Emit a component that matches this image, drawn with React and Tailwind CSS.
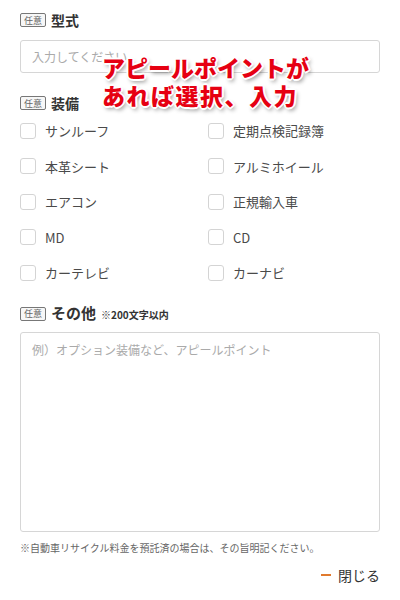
import React from "react";

const equipment = [
  ["サンルーフ", "定期点検記録簿"],
  ["本革シート", "アルミホイール"],
  ["エアコン", "正規輸入車"],
  ["MD", "CD"],
  ["カーテレビ", "カーナビ"],
];

const Badge = () => (
  <span className="inline-flex items-center justify-center h-[14px] px-[3px] border border-[#777] rounded-[2px] text-[9px] leading-none text-[#666] bg-[#f7f7f7]">
    任意
  </span>
);

const Check = ({ label }) => (
  <label className="flex items-center gap-[9px] h-[35.5px]">
    <span className="w-[16px] h-[16px] border border-[#d4d4d4] rounded-[3px] bg-white shrink-0" />
    <span className="text-[13px] text-[#4a4a4a]">{label}</span>
  </label>
);

export default function App() {
  return (
    <div
      className="relative w-[400px] h-[600px] bg-white overflow-hidden px-[20px] pt-[10px]"
      style={{ fontFamily: '"Noto Sans CJK JP", "Noto Sans", sans-serif' }}
    >
      {/* 型式 */}
      <div className="flex items-center gap-[5px] h-[20px]">
        <Badge />
        <span className="text-[14px] font-bold text-[#333]">型式</span>
      </div>
      <div className="mt-[10px] h-[33px] w-[360px] border border-[#d6d6d6] rounded-[3px] flex items-center px-[11px] text-[12px] text-[#aaa]">
        入力してください
      </div>

      {/* 装備 */}
      <div className="mt-[20px] flex items-center gap-[5px] h-[20px]">
        <Badge />
        <span className="text-[14px] font-bold text-[#333]">装備</span>
      </div>
      <div className="grid grid-cols-[188px_1fr]">
        {equipment.map(([a, b]) => (
          <React.Fragment key={a}>
            <Check label={a} />
            <Check label={b} />
          </React.Fragment>
        ))}
      </div>

      {/* その他 */}
      <div className="mt-[12px] flex items-center gap-[5px] h-[22px]">
        <Badge />
        <span className="text-[15px] font-bold text-[#333]">その他</span>
        <span className="text-[10px] font-bold text-[#333] mt-[1px]">※200文字以内</span>
      </div>
      <div className="mt-[7px] h-[200px] w-[360px] border border-[#d6d6d6] rounded-[3px] px-[11px] pt-[8px] text-[12px] text-[#aaa]">
        例）オプション装備など、アピールポイント
      </div>
      <p className="mt-[8px] text-[10px] text-[#666]">
        ※自動車リサイクル料金を預託済の場合は、その旨明記ください。
      </p>
      <div className="mt-[10px] flex justify-end items-center gap-[7px]">
        <span className="w-[10px] h-[2px] bg-[#e07a2e]" />
        <span className="text-[14px] text-[#333]">閉じる</span>
      </div>

      {/* annotation */}
      <div className="absolute left-[102px] top-[53px] text-[23px] leading-[28px] font-black text-[#e60012] [text-shadow:-1px_-1px_0_#fff,1px_-1px_0_#fff,-1px_1px_0_#fff,1px_1px_0_#fff,0_-2px_0_#fff,0_2px_0_#fff,-2px_0_0_#fff,2px_0_0_#fff,2px_3px_4px_rgba(0,0,0,0.45)]">
        <div>アピールポイントが</div>
        <div className="tracking-[1.5px]">あれば選択、入力</div>
      </div>
    </div>
  );
}
